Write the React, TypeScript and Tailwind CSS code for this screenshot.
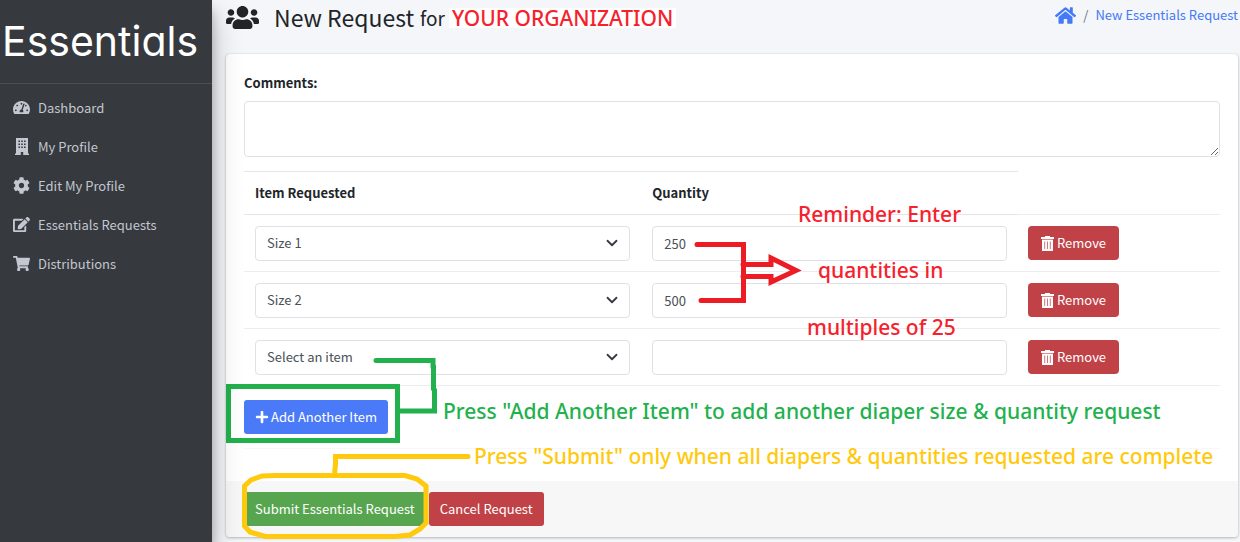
import React from "react";
import {
  FaCog,
  FaEdit,
  FaHome,
  FaPlus,
  FaShoppingCart,
  FaTachometerAlt,
  FaUsers,
} from "react-icons/fa";

function BuildingIcon({ className }: { className?: string }) {
  return (
    <svg viewBox="0 0 14 17" className={className} fill="currentColor" fillRule="evenodd">
      <path d="M1 0h12v15.500h1V17H8.200v-3H5.800v3H0v-1.500h1zM3.400 2.500v1.600H5V2.500zM6.200 2.500v1.600h1.600V2.500zM9 2.500v1.600h1.600V2.500zM3.400 5.500v1.600H5V5.500zM6.200 5.500v1.600h1.600V5.500zM9 5.500v1.600h1.600V5.500zM3.400 8.500v1.600H5V8.500zM6.200 8.500v1.600h1.600V8.500zM9 8.500v1.600h1.600V8.500z" />
    </svg>
  );
}

function TrashIcon() {
  return (
    <svg viewBox="0 0 13 15" className="h-[15px] w-[13px]" fill="#ffffff">
      <path d="M4 0h5v1h4v2H0V1h4z" />
      <path d="M1 3.600h11V15H1z" />
      <path d="M3.700 5.500v7.500M6.500 5.500v7.500M9.300 5.500v7.500" stroke="#d0777c" strokeWidth="1" />
    </svg>
  );
}

const NAV = [
  { label: "Dashboard", icon: FaTachometerAlt },
  { label: "My Profile", icon: BuildingIcon },
  { label: "Edit My Profile", icon: FaCog },
  { label: "Essentials Requests", icon: FaEdit },
  { label: "Distributions", icon: FaShoppingCart },
];

const ROWS = [
  { item: "Size 1", quantity: "250" },
  { item: "Size 2", quantity: "500" },
  { item: "Select an item", quantity: "" },
];

const OPTIONS = ["Select an item", "Size 1", "Size 2"];

function Sidebar() {
  return (
    <aside className="relative z-10 w-[212px] shrink-0 bg-[#36393e] shadow-[0_14px_28px_rgba(0,0,0,0.25),0_10px_10px_rgba(0,0,0,0.22)]">
      <a
        href="#"
        className="flex h-[84px] items-center border-b border-[#4b4f55] pl-[2px] font-['Inter'] text-[41px] leading-none text-white [font-feature-settings:'cv11']"
      >
        Essentials
      </a>
      <nav className="flex flex-col pt-1">
        {NAV.map(({ label, icon: Icon }) => (
          <a
            key={label}
            href="#"
            className="flex h-[39px] items-center gap-[7px] pl-3 text-[#c2c7d0]"
          >
            <span className="flex w-[19px] justify-center">
              <Icon className="h-[17px] w-auto" />
            </span>
            {label}
          </a>
        ))}
      </nav>
    </aside>
  );
}

function ItemRow({ item, quantity, index }: { item: string; quantity: string; index: number }) {
  return (
    <tr className="h-[57px] border-b border-[#ebedef]">
      <td className="px-[11px]">
        <div className="relative">
          <select
            aria-label={`Item ${index}`}
            defaultValue={item}
            className="block h-[35px] w-full appearance-none rounded-[4px] border border-[#dee1e5] bg-white px-[11px] text-[#495057]"
          >
            {OPTIONS.map((o) => (
              <option key={o}>{o}</option>
            ))}
          </select>
          <svg
            viewBox="0 0 16 16"
            className="pointer-events-none absolute top-[11px] right-3 size-3"
            fill="none"
            stroke="#343a40"
            strokeWidth="2.4"
            strokeLinecap="round"
            strokeLinejoin="round"
          >
            <path d="m2 5 6 6 6-6" />
          </svg>
        </div>
      </td>
      <td className="px-[11px]">
        <input
          aria-label={`Quantity ${index}`}
          defaultValue={quantity}
          className="block h-[35px] w-full rounded-[4px] border border-[#dee1e5] bg-white px-[11px] text-[#495057]"
        />
      </td>
      <td className="px-[10px]">
        <button className="flex h-[34px] items-center gap-[3px] rounded-[4px] bg-[#c04247] px-[13px] text-white">
          <TrashIcon />
          Remove
        </button>
      </td>
    </tr>
  );
}

const NOTE = "absolute whitespace-nowrap font-['Noto_Sans'] text-[21px] leading-[30px] font-medium";

function Annotations() {
  return (
    <div className="pointer-events-none absolute inset-0">
      <svg className="absolute top-0 left-0 overflow-visible" width="1012" height="484" fill="none">
        <g transform="translate(-226 -54)" strokeWidth="5" strokeLinecap="round">
          <path stroke="#ed1c24" d="M697 244.500H743.500V300.500H701M743 264.500H771V258L796 270.500L771 282V276.500H743" />
          <g stroke="#22b14c">
            <path d="M376 360.500H433V367M433.500 366V389L434.500 390V411H399" />
            <path strokeLinecap="butt" d="M228.500 386.500H397.500V440.500H228.500Z" />
          </g>
          <path
            stroke="#ffc90e"
            d="M468 456.500H335.500V464L334.500 475M276 475.500H405L417 479L426 486V523L420 529L410 535L395 536.500H265L250 532L244.500 526V486L251 480L262 476L276 475.500Z"
          />
        </g>
      </svg>
      <p className={`${NOTE} top-[145px] left-[572px] text-[#f5222d]`}>Reminder: Enter</p>
      <p className={`${NOTE} top-[201px] left-[592px] text-[#f5222d]`}>quantities in</p>
      <p className={`${NOTE} top-[258px] left-[581px] text-[#f5222d]`}>multiples of 25</p>
      <p className={`${NOTE} top-[342px] left-[217px] text-[#22b14c]`}>
        Press "Add Another Item" to add another diaper size &amp; quantity request
      </p>
      <p className={`${NOTE} top-[387px] left-[248px] text-[#ffc90e]`}>
        Press "Submit" only when all diapers &amp; quantities requested are complete
      </p>
    </div>
  );
}

export default function App() {
  return (
    <div className="flex min-h-screen bg-[#f4f6f9] font-['Noto_Sans_CJK_SC',sans-serif] text-[13px] leading-5 text-[#212529]">
      <Sidebar />
      <main className="min-w-0 flex-1 pr-[2px] pb-[5px] pl-[14px]">
        <header className="flex h-[54px] items-start justify-between">
          <h1 className="flex h-[35px] items-center text-[23px] leading-[35px]">
            <FaUsers size={33} className="mr-[15px]" />
            <span>New Request</span>
            <span className="ml-[6px] text-[19px]">for</span>
            <span className="ml-1 bg-white px-[3px] font-['Noto_Sans'] text-[21px] leading-5 font-medium text-[#f5222d]">
              YOUR ORGANIZATION
            </span>
          </h1>
          <nav aria-label="Breadcrumb" className="flex h-[30px] items-center gap-[7px]">
            <a href="#" aria-label="Home" className="text-[#4479f7]">
              <FaHome size={21} />
            </a>
            <span className="text-[#6c757d]">/</span>
            <a href="#" className="text-[#4479f7]">
              New Essentials Request
            </a>
          </nav>
        </header>

        <section className="relative rounded-[4px] bg-white shadow-[0_0_1px_rgba(0,0,0,0.2),0_1px_3px_rgba(0,0,0,0.25)]">
          <div className="flex flex-col items-start px-[18px] pt-[19px] pb-8">
            <label htmlFor="comments" className="font-bold">
              Comments:
            </label>
            <textarea
              id="comments"
              className="mt-2 block h-[56px] w-full rounded-[4px] border border-[#dee1e5] bg-white p-2"
            />
            <table className="mt-[14px] w-full table-fixed border-collapse">
              <thead>
                <tr className="h-[43px] text-left">
                  <th className="w-[40.7%] border-t border-b border-[#e3e6e9] px-[11px] font-bold">
                    Item Requested
                  </th>
                  <th className="w-[38.6%] border-t border-b border-[#e3e6e9] px-[11px] font-bold">
                    Quantity
                  </th>
                  <td className="border-b border-[#ebedef]" />
                </tr>
              </thead>
              <tbody>
                {ROWS.map((r, i) => (
                  <ItemRow key={r.item} item={r.item} quantity={r.quantity} index={i + 1} />
                ))}
              </tbody>
            </table>
            <button className="mt-[14px] flex h-[34px] items-center gap-[2px] rounded-[3px] bg-[#4a7af7] px-[11px] text-white">
              <FaPlus size={14} />
              Add Another Item
            </button>
            <hr className="mt-[14px] w-full border-[#f7f7f7]" />
          </div>
          <footer className="flex h-[56px] items-center gap-[3px] rounded-b-[4px] bg-[#f7f7f7] px-[18px]">
            <button className="h-[34px] rounded-[3px] bg-[#58a550] px-[11px] text-white">
              Submit Essentials Request
            </button>
            <button className="h-[34px] rounded-[3px] bg-[#c04247] px-[11px] text-white">
              Cancel Request
            </button>
          </footer>
          <Annotations />
        </section>
      </main>
    </div>
  );
}
